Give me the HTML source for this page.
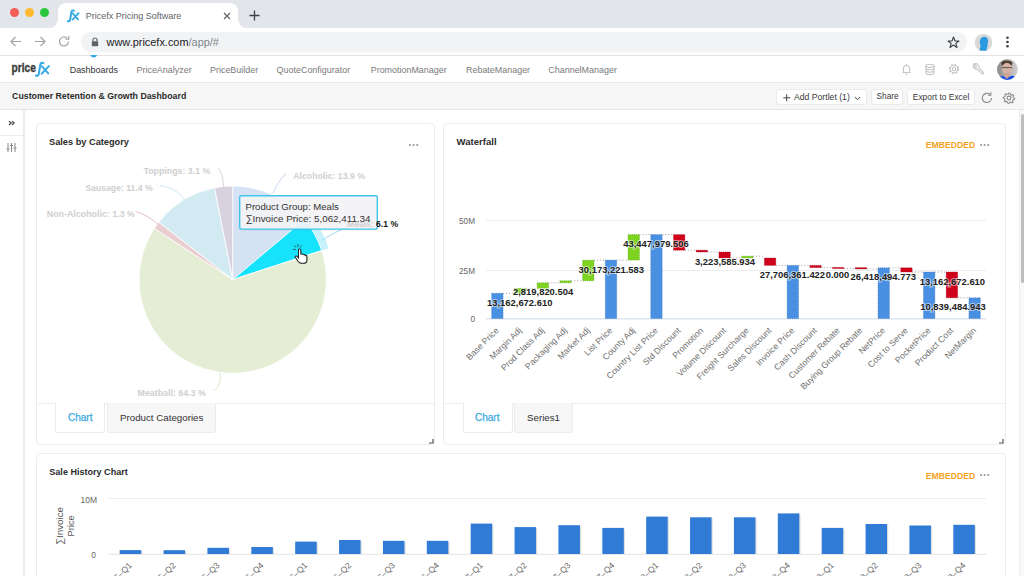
<!DOCTYPE html>
<html><head><meta charset="utf-8"><title>Pricefx Dashboard</title>
<style>
html,body{margin:0;padding:0;width:1024px;height:576px;overflow:hidden;background:#fff;font-family:"Liberation Sans", sans-serif;}
</style></head><body>
<div style="position:relative;width:1024px;height:576px;overflow:hidden">
<div style="position:absolute;left:0px;top:0px;width:1024px;height:28px;background:#e2e5e9"></div>
<div style="position:absolute;left:9.5px;top:8px;width:9px;height:9px;background:#f55e57;border-radius:50%"></div>
<div style="position:absolute;left:24.5px;top:8px;width:9px;height:9px;background:#fdb932;border-radius:50%"></div>
<div style="position:absolute;left:39.5px;top:8px;width:9px;height:9px;background:#2bc73f;border-radius:50%"></div>
<div style="position:absolute;left:58px;top:3px;width:180px;height:26px;background:#fff;border-radius:8px 8px 0 0"></div>
<div style="position:absolute;left:50px;top:21px;width:8px;height:7px;background:radial-gradient(circle at 0 0,#e2e5e9 6.6px,#fff 7.4px)"></div>
<div style="position:absolute;left:238px;top:21px;width:8px;height:7px;background:radial-gradient(circle at 100% 0,#e2e5e9 6.6px,#fff 7.4px)"></div>
<svg style="position:absolute;left:66px;top:9px" width="15" height="15"><g transform="translate(1 1)" fill="none" stroke="#36a9e1" stroke-linecap="round"><path d="M6.9 0.7C5.8 0.2 4.7 0.6 4.4 2.2L3.1 9.8C2.8 11.2 2 11.6 0.8 11.2" stroke-width="2"/><path d="M5.8 3.4L11 9.4M11.6 3.2L5.6 9.6" stroke-width="1.8"/></g></svg>
<div style="position:absolute;left:85.7px;top:11.72px;font-size:9.03px;line-height:9.03px;color:#5f6368;font-weight:normal;white-space:nowrap;">Pricefx Pricing Software</div>
<svg style="position:absolute;left:222.5px;top:12px" width="8" height="8"><path d="M1 1L7 7M7 1L1 7" stroke="#5f6368" stroke-width="1.15"/></svg>
<svg style="position:absolute;left:249px;top:10px" width="11" height="11"><path d="M5.5 0.5V10.5M0.5 5.5H10.5" stroke="#3c4043" stroke-width="1.3"/></svg>
<div style="position:absolute;left:0px;top:28px;width:1024px;height:27px;background:#fff"></div>
<div style="position:absolute;left:0px;top:55px;width:1024px;height:1px;background:#e3e3e3"></div>
<svg style="position:absolute;left:9px;top:35px" width="50" height="13"><path d="M12 6.5H2M6.5 2L2 6.5L6.5 11" fill="none" stroke="#a0a4a8" stroke-width="1.2"/><path d="M26 6.5H36M31.5 2L36 6.5L31.5 11" fill="none" stroke="#a0a4a8" stroke-width="1.2"/></svg>
<svg style="position:absolute;left:58px;top:35px" width="13" height="13"><path d="M10.5 6.5A4.5 4.5 0 1 1 9.2 3.3" fill="none" stroke="#a0a4a8" stroke-width="1.2"/><path d="M10.8 1V4.2H7.6" fill="none" stroke="#a0a4a8" stroke-width="1.2"/></svg>
<div style="position:absolute;left:81px;top:32px;width:886px;height:20px;background:#f1f3f4;border-radius:10px"></div>
<svg style="position:absolute;left:91px;top:37px" width="8" height="10"><path d="M2 4.5V3A2 2 0 0 1 6 3V4.5" fill="none" stroke="#5f6368" stroke-width="1.2"/><rect x="0.8" y="4.3" width="6.4" height="5" rx="0.8" fill="#5f6368"/></svg>
<div style="position:absolute;left:106.6px;top:37.11px;font-size:10.93px;line-height:10.93px;color:#202124;font-weight:normal;white-space:nowrap;"><span style="color:#202124">www.pricefx.com</span><span style="color:#80868b">/app/#</span></div>
<svg style="position:absolute;left:947px;top:36px" width="13" height="13"><path d="M6.5 1L8 5H12L8.8 7.4L10 11.5L6.5 9L3 11.5L4.2 7.4L1 5H5Z" fill="none" stroke="#3c4043" stroke-width="1.1" stroke-linejoin="round"/></svg>
<svg style="position:absolute;left:974px;top:33px" width="19" height="19"><circle cx="9.5" cy="9.5" r="8.8" fill="#d9d9d9"/><path d="M5.5 17.5C6 15 6.5 14 6.6 12C5 10.5 5.5 4 10 3.8C13.5 3.8 14.5 6.5 14 9C13.8 10 13.5 11 13.5 12.5C13.5 14 12.5 15 12.5 17.8Z" fill="#2c9ae2"/></svg>
<svg style="position:absolute;left:1004px;top:34px" width="8" height="16" fill="#3c4043"><circle cx="3.5" cy="3.8" r="1.3"/><circle cx="3.5" cy="8" r="1.3"/><circle cx="3.5" cy="12.2" r="1.3"/></svg>
<div style="position:absolute;left:0px;top:56px;width:1024px;height:26px;background:#fff"></div>
<div style="position:absolute;left:0px;top:82px;width:1024px;height:1px;background:#ebebeb"></div>
<div style="position:absolute;left:0px;top:52px;width:1024px;height:3px;background:#fff"></div>
<div style="position:absolute;left:0px;top:55px;width:1024px;height:1px;background:#e3e3e3"></div>
<svg style="position:absolute;left:88px;top:55px" width="12" height="5"><path d="M2.32 0A3.5 3.5 0 0 0 9.08 0Z" fill="#3aa5ef"/></svg>
<svg style="position:absolute;left:0;top:56px" width="60" height="26"><text x="11.6" y="16.4" font-family='"Liberation Sans",sans-serif' font-size="13.6" font-weight="bold" fill="#3d3d3d" stroke="#3d3d3d" stroke-width="0.45" textLength="24.2" lengthAdjust="spacingAndGlyphs">price</text><g transform="translate(35 6.2) scale(1.2)" fill="none" stroke="#36aae4" stroke-linecap="round"><path d="M6.9 0.7C5.8 0.2 4.7 0.6 4.4 2.2L3.1 9.8C2.8 11.2 2 11.6 0.8 11.2" stroke-width="1.75"/><path d="M5.8 3.4L11 9.4M11.6 3.2L5.6 9.6" stroke-width="1.6"/></g></svg>
<div style="position:absolute;left:69.7px;top:65.59px;font-size:8.95px;line-height:8.95px;color:#333;font-weight:normal;white-space:nowrap;">Dashboards</div>
<div style="position:absolute;left:136.5px;top:65.59px;font-size:8.95px;line-height:8.95px;color:#7a7a7a;font-weight:normal;white-space:nowrap;">PriceAnalyzer</div>
<div style="position:absolute;left:210px;top:65.59px;font-size:8.95px;line-height:8.95px;color:#7a7a7a;font-weight:normal;white-space:nowrap;">PriceBuilder</div>
<div style="position:absolute;left:276.6px;top:65.59px;font-size:8.95px;line-height:8.95px;color:#7a7a7a;font-weight:normal;white-space:nowrap;">QuoteConfigurator</div>
<div style="position:absolute;left:370.7px;top:65.59px;font-size:8.95px;line-height:8.95px;color:#7a7a7a;font-weight:normal;white-space:nowrap;">PromotionManager</div>
<div style="position:absolute;left:466px;top:65.59px;font-size:8.95px;line-height:8.95px;color:#7a7a7a;font-weight:normal;white-space:nowrap;">RebateManager</div>
<div style="position:absolute;left:548.3px;top:65.59px;font-size:8.95px;line-height:8.95px;color:#7a7a7a;font-weight:normal;white-space:nowrap;">ChannelManager</div>
<svg style="position:absolute;left:900px;top:62px" width="90" height="14" fill="none" stroke="#c4c4c4" stroke-width="1.1"><path d="M2.5 10.5H10.5M3.5 10.5V6.5A3 3 0 0 1 9.5 6.5V10.5M5.5 12.3H7.5M6.5 2V3.5"/><ellipse cx="30" cy="3.8" rx="4" ry="1.6"/><path d="M26 3.8V11A4 1.6 0 0 0 34 11V3.8M26 6.2A4 1.6 0 0 0 34 6.2M26 8.6A4 1.6 0 0 0 34 8.6"/><circle cx="54" cy="7" r="1.7"/><circle cx="54" cy="7" r="3.7"/><circle cx="54" cy="7" r="4.6" stroke-width="1.5" stroke-dasharray="1.5 2.11"/><path d="M73.6 2.6A3.2 3.2 0 0 0 77.4 7L82 11.6A0.9 0.9 0 0 0 83.3 10.3L78.7 5.7A3.2 3.2 0 0 0 74.3 1.9L76.3 3.9L75.9 5.5L74.3 5.9Z"/></svg>
<svg style="position:absolute;left:996.7px;top:58.7px" width="21" height="21"><defs><clipPath id="av"><circle cx="10.4" cy="10.5" r="10.4"/></clipPath><linearGradient id="avg" x1="0" x2="1"><stop offset="0" stop-color="#8e8c8b"/><stop offset="1" stop-color="#d2d0ce"/></linearGradient><filter id="avb"><feGaussianBlur stdDeviation="0.45"/></filter></defs><g clip-path="url(#av)"><rect width="21" height="21" fill="url(#avg)"/><g filter="url(#avb)"><ellipse cx="9.8" cy="4.6" rx="5.6" ry="3.2" fill="#4d3d35"/><ellipse cx="9.9" cy="9.8" rx="4.9" ry="6" fill="#d8b3a3"/><rect x="7.6" y="14" width="5" height="6" fill="#cfa493"/><path d="M4.6 8.6H15.2" stroke="#5a5555" stroke-width="1"/><path d="M1.5 21.5L3.5 17.5C5.5 16.2 7.5 17.5 10 20C12.5 17.5 14.5 16.2 17 17.2L20 21.5Z" fill="#1f4fe3"/></g></g></svg>
<div style="position:absolute;left:0px;top:83px;width:1024px;height:26px;background:#f6f6f6"></div>
<div style="position:absolute;left:0px;top:109px;width:1024px;height:1px;background:#e6e6e6"></div>
<div style="position:absolute;left:12.1px;top:91.73px;font-size:8.79px;line-height:8.79px;color:#2b2b2b;font-weight:bold;white-space:nowrap;">Customer Retention &amp; Growth Dashboard</div>
<div style="position:absolute;left:776.3px;top:88.8px;width:90.8px;height:16.2px;background:#fff;border:1px solid #ebebeb;border-radius:3px;box-sizing:border-box"></div>
<div style="position:absolute;left:871.1px;top:88.8px;width:32.1px;height:16.2px;background:#fff;border:1px solid #ebebeb;border-radius:3px;box-sizing:border-box"></div>
<div style="position:absolute;left:907.4px;top:88.8px;width:67.3px;height:16.2px;background:#fff;border:1px solid #ebebeb;border-radius:3px;box-sizing:border-box"></div>
<svg style="position:absolute;left:782.5px;top:93.5px" width="8" height="8"><path d="M3.7 0.3V7.3M0.3 3.8H7.3" stroke="#444" stroke-width="1"/></svg>
<div style="position:absolute;left:793.9px;top:92.81px;font-size:8.69px;line-height:8.69px;color:#3a3a3a;font-weight:normal;white-space:nowrap;">Add Portlet (1)</div>
<svg style="position:absolute;left:854px;top:95.5px" width="7" height="5"><path d="M0.8 1L3.5 3.7L6.2 1" fill="none" stroke="#444" stroke-width="1"/></svg>
<div style="position:absolute;left:876.6px;top:93.20px;font-size:8.24px;line-height:8.24px;color:#3a3a3a;font-weight:normal;white-space:nowrap;">Share</div>
<div style="position:absolute;left:912.8px;top:93.04px;font-size:8.42px;line-height:8.42px;color:#3a3a3a;font-weight:normal;white-space:nowrap;">Export to Excel</div>
<svg style="position:absolute;left:980px;top:90.5px" width="14" height="14"><path d="M11.5 7A4.6 4.6 0 1 1 10 3.5" fill="none" stroke="#8a8a8a" stroke-width="1.1"/><path d="M10.8 1.2V4.3H7.8" fill="none" stroke="#8a8a8a" stroke-width="1.1"/></svg>
<svg style="position:absolute;left:1002px;top:90.5px" width="14" height="14" fill="none" stroke="#8a8a8a" stroke-width="1.1"><circle cx="7" cy="7" r="1.9"/><path d="M7 1.8L8.1 2L8.5 3.4L9.7 4L11 3.5L11.8 4.4L11.2 5.7L11.6 6.9L13 7.3L12.8 8.5L11.4 8.9L10.8 10L11.3 11.3L10.3 12L9.2 11.2L7.8 11.5L7 12.8L5.8 12.6L5.4 11.2L4.2 10.5L2.9 11L2.1 10.1L2.7 8.8L2.3 7.6L0.9 7.2L1.2 6L2.6 5.6L3.2 4.5L2.7 3.2L3.8 2.4L4.9 3.3L6.3 3Z" transform="translate(7 7) scale(0.95) translate(-7 -7)"/></svg>
<div style="position:absolute;left:0px;top:110px;width:1024px;height:466px;background:#fff"></div>
<div style="position:absolute;left:23px;top:110px;width:1.6px;height:466px;background:#ececec"></div>
<div style="position:absolute;left:0px;top:134.8px;width:23px;height:1.4px;background:#ececec"></div>
<svg style="position:absolute;left:8px;top:119.5px" width="8" height="7"><path d="M1 1.2L3.1 3.1L1 5M4 1.2L6.1 3.1L4 5" fill="none" stroke="#555" stroke-width="1.4"/></svg>
<svg style="position:absolute;left:6px;top:141.5px" width="11" height="11" fill="none" stroke="#888" stroke-width="1"><path d="M2 1V10M5.5 1V10M9 1V10"/><path d="M0.5 7H3.5M4 3.5H7M7.5 6H10.5"/></svg>
<div style="position:absolute;left:1018.5px;top:110px;width:5.5px;height:466px;background:#f8f8f8;border-left:1px solid #eeeeee"></div>
<div style="position:absolute;left:1020.5px;top:114px;width:3.5px;height:169px;background:#bdbdbd;border-radius:2px"></div>
<div style="position:absolute;left:36.3px;top:123px;width:399.2px;height:322.4px;background:#fff;border:1px solid #ededed;border-radius:4px;box-sizing:border-box"></div>
<div style="position:absolute;left:443px;top:123px;width:563px;height:322.4px;background:#fff;border:1px solid #ededed;border-radius:4px;box-sizing:border-box"></div>
<div style="position:absolute;left:36.3px;top:453.3px;width:969.7px;height:140px;background:#fff;border:1px solid #ededed;border-radius:4px;box-sizing:border-box"></div>
<div style="position:absolute;left:49px;top:137.75px;font-size:9.23px;line-height:9.23px;color:#2b2b2b;font-weight:bold;white-space:nowrap;">Sales by Category</div>
<div style="position:absolute;left:456.6px;top:137.47px;font-size:9.56px;line-height:9.56px;color:#2b2b2b;font-weight:bold;white-space:nowrap;">Waterfall</div>
<div style="position:absolute;left:49.3px;top:468.01px;font-size:9.05px;line-height:9.05px;color:#2b2b2b;font-weight:bold;white-space:nowrap;">Sale History Chart</div>
<svg style="position:absolute;left:408px;top:141.5px" width="14" height="6" fill="#9a9a9a"><circle cx="2" cy="3" r="1.1"/><circle cx="5.6" cy="3" r="1.1"/><circle cx="9.2" cy="3" r="1.1"/></svg>
<svg style="position:absolute;left:979px;top:141.5px" width="14" height="6" fill="#9a9a9a"><circle cx="2" cy="3" r="1.1"/><circle cx="5.6" cy="3" r="1.1"/><circle cx="9.2" cy="3" r="1.1"/></svg>
<svg style="position:absolute;left:979px;top:472px" width="14" height="6" fill="#9a9a9a"><circle cx="2" cy="3" r="1.1"/><circle cx="5.6" cy="3" r="1.1"/><circle cx="9.2" cy="3" r="1.1"/></svg>
<div style="position:absolute;left:925.8px;top:141.26px;font-size:8.63px;line-height:8.63px;color:#f5a21e;font-weight:bold;white-space:nowrap;">EMBEDDED</div>
<div style="position:absolute;left:925.8px;top:471.66px;font-size:8.63px;line-height:8.63px;color:#f5a21e;font-weight:bold;white-space:nowrap;">EMBEDDED</div>
<div style="position:absolute;left:37.5px;top:402.5px;width:397px;height:1px;background:#ececec"></div>
<div style="position:absolute;left:55.4px;top:402.5px;width:49.8px;height:30px;background:#fff;border:1px solid #ececec;border-top:none;border-radius:0 0 3px 3px;box-sizing:border-box"></div>
<div style="position:absolute;left:107px;top:402.5px;width:109px;height:30px;background:#f7f7f7;border:1px solid #ececec;border-top:none;border-radius:0 0 3px 3px;box-sizing:border-box"></div>
<div style="position:absolute;left:68px;top:412.78px;font-size:10.02px;line-height:10.02px;color:#39a9e0;font-weight:normal;white-space:nowrap;-webkit-text-stroke:0.25px #39a9e0">Chart</div>
<div style="position:absolute;left:120px;top:413.02px;font-size:9.74px;line-height:9.74px;color:#333;font-weight:normal;white-space:nowrap;">Product Categories</div>
<div style="position:absolute;left:444.5px;top:402.5px;width:560.5px;height:1px;background:#ececec"></div>
<div style="position:absolute;left:462.6px;top:402.5px;width:50px;height:30px;background:#fff;border:1px solid #ececec;border-top:none;border-radius:0 0 3px 3px;box-sizing:border-box"></div>
<div style="position:absolute;left:514px;top:402.5px;width:59px;height:30px;background:#f7f7f7;border:1px solid #ececec;border-top:none;border-radius:0 0 3px 3px;box-sizing:border-box"></div>
<div style="position:absolute;left:475px;top:412.78px;font-size:10.02px;line-height:10.02px;color:#39a9e0;font-weight:normal;white-space:nowrap;-webkit-text-stroke:0.25px #39a9e0">Chart</div>
<div style="position:absolute;left:527px;top:413.02px;font-size:9.74px;line-height:9.74px;color:#333;font-weight:normal;white-space:nowrap;">Series1</div>
<svg style="position:absolute;left:429px;top:438.5px" width="5" height="5"><path d="M4 0V4H0" fill="none" stroke="#555" stroke-width="1.2"/></svg>
<svg style="position:absolute;left:999px;top:438.5px" width="5" height="5"><path d="M4 0V4H0" fill="none" stroke="#555" stroke-width="1.2"/></svg>
<svg style="position:absolute;left:0;top:0" width="1024" height="576">
<path d="M232.7,279.6L232.70,186.00A93.6,93.6 0 0 1 304.39,219.42Z" fill="#d4e2f4" stroke="#fff" stroke-width="0.8" stroke-linejoin="round"/>
<path d="M304.39,219.42L310.06,214.66A101,101 0 0 1 328.72,248.27L321.68,250.56A93.6,93.6 0 0 0 304.39,219.42Z" fill="#c6f3fb"/>
<path d="M232.7,279.6L304.39,219.42A93.6,93.6 0 0 1 321.68,250.56Z" fill="#17e2fb" stroke="#fff" stroke-width="0.8" stroke-linejoin="round"/>
<path d="M232.7,279.6L321.68,250.56A93.6,93.6 0 1 1 154.36,228.38Z" fill="#e5eed5" stroke="#fff" stroke-width="0.8" stroke-linejoin="round"/>
<path d="M232.7,279.6L154.36,228.38A93.6,93.6 0 0 1 158.79,222.16Z" fill="#e9cdd1" stroke="#fff" stroke-width="0.8" stroke-linejoin="round"/>
<path d="M232.7,279.6L158.79,222.16A93.6,93.6 0 0 1 214.60,187.77Z" fill="#d2eaf2" stroke="#fff" stroke-width="0.8" stroke-linejoin="round"/>
<path d="M232.7,279.6L214.60,187.77A93.6,93.6 0 0 1 232.70,186.00Z" fill="#d8d1df" stroke="#fff" stroke-width="0.8" stroke-linejoin="round"/>
<path d="M218,168.3 C221,170 223,178 223.6,186.3" fill="none" stroke="#d8d1df" stroke-width="1"/>
<path d="M160,185.7 C170,187 180,192 184,199.5" fill="none" stroke="#c9e6f0" stroke-width="1"/>
<path d="M135.7,211.6 C145,214 152,219 158,224.3" fill="none" stroke="#e3bfc4" stroke-width="1"/>
<path d="M286,173 C280,180 276,186 273,193.4" fill="none" stroke="#c9dbf2" stroke-width="1"/>
<path d="M220,373 C221,380 219,388 213.75,390.8" fill="none" stroke="#dde7c6" stroke-width="1"/>
<path d="M322,240 C335,232 345,228 350,226" fill="none" stroke="#9bdcf0" stroke-width="1"/>
<text x="143.5" y="173.5" font-family='"Liberation Sans", sans-serif' font-size="8.8" font-weight="bold" fill="#cfcfcf" text-anchor="start" >Toppings: 3.1 %</text>
<text x="85.3" y="190.7" font-family='"Liberation Sans", sans-serif' font-size="8.69" font-weight="bold" fill="#cfcfcf" text-anchor="start" >Sausage: 11.4 %</text>
<text x="46.8" y="216.5" font-family='"Liberation Sans", sans-serif' font-size="8.87" font-weight="bold" fill="#cfcfcf" text-anchor="start" >Non-Alcoholic: 1.3 %</text>
<text x="293.3" y="178.5" font-family='"Liberation Sans", sans-serif' font-size="8.72" font-weight="bold" fill="#cfcfcf" text-anchor="start" >Alcoholic: 13.9 %</text>
<text x="137.5" y="395.5" font-family='"Liberation Sans", sans-serif' font-size="8.87" font-weight="bold" fill="#cfcfcf" text-anchor="start" >Meatball: 64.3 %</text>
<rect x="240" y="196" width="137" height="33" rx="1.5" fill="#000" opacity="0.06" transform="translate(1 1.5)"/>
<rect x="239.7" y="195.7" width="137.6" height="33.4" rx="1.5" fill="#f4f4f6" fill-opacity="0.92" stroke="#3fc5ec" stroke-width="1.4"/>
<text x="347" y="227" font-family='"Liberation Sans", sans-serif' font-size="8.58" font-weight="bold" fill="#cfcfcf" text-anchor="start" >Meals: <tspan fill="#111">6.1 %</tspan></text>
<text x="245.5" y="210" font-family='"Liberation Sans", sans-serif' font-size="9.61" font-weight="normal" fill="#333" text-anchor="start" >Product Group: Meals</text>
<text x="245.5" y="221.5" font-family='"Liberation Sans", sans-serif' font-size="9.8" font-weight="normal" fill="#333" text-anchor="start" >∑Invoice Price: 5,062,411.34</text>
<g transform="translate(294.8 248.6) scale(1.12)"><path d="M3.3 1.2V8.2L1.7 6.8C1 6.2 0 6.9 0.5 7.7L3 11.5C3.8 12.6 4.8 13 6 13H8C9.6 13 10.8 11.8 10.8 10.2V6.8C10.8 6.1 9.8 6 9.6 6.8V6.1C9.6 5.3 8.5 5.3 8.4 6V5.6C8.4 4.8 7.2 4.8 7.1 5.5V5.3C7.1 4.6 5.5 4.6 5.4 5.3V1.2C5.4 0 3.3 0 3.3 1.2Z" fill="#000" opacity="0.25" transform="translate(0.6 0.8)"/><path d="M3.3 1.2V8.2L1.7 6.8C1 6.2 0 6.9 0.5 7.7L3 11.5C3.8 12.6 4.8 13 6 13H8C9.6 13 10.8 11.8 10.8 10.2V6.8C10.8 6.1 9.8 6 9.6 6.8V6.1C9.6 5.3 8.5 5.3 8.4 6V5.6C8.4 4.8 7.2 4.8 7.1 5.5V5.3C7.1 4.6 5.5 4.6 5.4 5.3V1.2C5.4 0 3.3 0 3.3 1.2Z" fill="#fff" stroke="#222" stroke-width="0.9"/></g>
<g stroke="#333" stroke-width="0.75"><path d="M298 244V247M293 249.5H295.8M294.4 245.6L296.3 247.4M301.8 245.6L299.9 247.4"/></g>
<g stroke="#ececec" stroke-width="1"><path d="M486,220.5H986M486,270.5H986"/></g>
<path d="M486,318.8H986" stroke="#d8e2ee" stroke-width="1.2"/>
<text x="475" y="223.5" font-family='"Liberation Sans", sans-serif' font-size="8.2" font-weight="normal" fill="#666" text-anchor="end" >50M</text>
<text x="475" y="273.5" font-family='"Liberation Sans", sans-serif' font-size="8.2" font-weight="normal" fill="#666" text-anchor="end" >25M</text>
<text x="475" y="322" font-family='"Liberation Sans", sans-serif' font-size="8.2" font-weight="normal" fill="#666" text-anchor="end" >0</text>
<rect x="491.66" y="293.3" width="11.4" height="25.20" fill="#4a90e2" stroke="#2f6fbf" stroke-width="0.6" stroke-dasharray="1 1"/>
<path d="M503.06,293.3H514.39" stroke="#888" stroke-width="0.8" stroke-dasharray="1 2"/>
<text x="499.36" y="331" transform="rotate(-45 499.36 331)" font-family='"Liberation Sans", sans-serif' font-size="8.7" fill="#6f6f6f" text-anchor="end">Base Price</text>
<rect x="514.39" y="288.4" width="11.4" height="4.90" fill="#7ed321" stroke="#5aa513" stroke-width="0.6" stroke-dasharray="1 1"/>
<path d="M525.79,288.4H537.12" stroke="#888" stroke-width="0.8" stroke-dasharray="1 2"/>
<text x="522.09" y="331" transform="rotate(-45 522.09 331)" font-family='"Liberation Sans", sans-serif' font-size="8.7" fill="#6f6f6f" text-anchor="end">Margin Adj</text>
<rect x="537.12" y="282.8" width="11.4" height="5.60" fill="#7ed321" stroke="#5aa513" stroke-width="0.6" stroke-dasharray="1 1"/>
<path d="M548.52,282.8H559.85" stroke="#888" stroke-width="0.8" stroke-dasharray="1 2"/>
<text x="544.82" y="331" transform="rotate(-45 544.82 331)" font-family='"Liberation Sans", sans-serif' font-size="8.7" fill="#6f6f6f" text-anchor="end">Prod Class Adj</text>
<rect x="559.85" y="280.8" width="11.4" height="2.00" fill="#7ed321" stroke="#5aa513" stroke-width="0.6" stroke-dasharray="1 1"/>
<path d="M571.25,280.8H582.57" stroke="#888" stroke-width="0.8" stroke-dasharray="1 2"/>
<text x="567.55" y="331" transform="rotate(-45 567.55 331)" font-family='"Liberation Sans", sans-serif' font-size="8.7" fill="#6f6f6f" text-anchor="end">Packaging Adj</text>
<rect x="582.57" y="260.2" width="11.4" height="20.60" fill="#7ed321" stroke="#5aa513" stroke-width="0.6" stroke-dasharray="1 1"/>
<path d="M593.97,260.2H605.30" stroke="#888" stroke-width="0.8" stroke-dasharray="1 2"/>
<text x="590.27" y="331" transform="rotate(-45 590.27 331)" font-family='"Liberation Sans", sans-serif' font-size="8.7" fill="#6f6f6f" text-anchor="end">Market Adj</text>
<rect x="605.30" y="260.1" width="11.4" height="58.40" fill="#4a90e2" stroke="#2f6fbf" stroke-width="0.6" stroke-dasharray="1 1"/>
<path d="M616.70,260.1H628.03" stroke="#888" stroke-width="0.8" stroke-dasharray="1 2"/>
<text x="613.00" y="331" transform="rotate(-45 613.00 331)" font-family='"Liberation Sans", sans-serif' font-size="8.7" fill="#6f6f6f" text-anchor="end">List Price</text>
<rect x="628.03" y="234.6" width="11.4" height="25.50" fill="#7ed321" stroke="#5aa513" stroke-width="0.6" stroke-dasharray="1 1"/>
<path d="M639.43,234.6H650.75" stroke="#888" stroke-width="0.8" stroke-dasharray="1 2"/>
<text x="635.73" y="331" transform="rotate(-45 635.73 331)" font-family='"Liberation Sans", sans-serif' font-size="8.7" fill="#6f6f6f" text-anchor="end">County Adj</text>
<rect x="650.75" y="234.6" width="11.4" height="83.90" fill="#4a90e2" stroke="#2f6fbf" stroke-width="0.6" stroke-dasharray="1 1"/>
<path d="M662.15,234.6H673.48" stroke="#888" stroke-width="0.8" stroke-dasharray="1 2"/>
<text x="658.45" y="331" transform="rotate(-45 658.45 331)" font-family='"Liberation Sans", sans-serif' font-size="8.7" fill="#6f6f6f" text-anchor="end">Country List Price</text>
<rect x="673.48" y="234.6" width="11.4" height="15.60" fill="#d0021b" stroke="#9e0012" stroke-width="0.6" stroke-dasharray="1 1"/>
<path d="M684.88,250.2H696.21" stroke="#888" stroke-width="0.8" stroke-dasharray="1 2"/>
<text x="681.18" y="331" transform="rotate(-45 681.18 331)" font-family='"Liberation Sans", sans-serif' font-size="8.7" fill="#6f6f6f" text-anchor="end">Std Discount</text>
<rect x="696.21" y="250.2" width="11.4" height="1.80" fill="#d0021b" stroke="#9e0012" stroke-width="0.6" stroke-dasharray="1 1"/>
<path d="M707.61,252H718.94" stroke="#888" stroke-width="0.8" stroke-dasharray="1 2"/>
<text x="703.91" y="331" transform="rotate(-45 703.91 331)" font-family='"Liberation Sans", sans-serif' font-size="8.7" fill="#6f6f6f" text-anchor="end">Promotion</text>
<rect x="718.94" y="252" width="11.4" height="6.00" fill="#d0021b" stroke="#9e0012" stroke-width="0.6" stroke-dasharray="1 1"/>
<path d="M730.34,258H741.66" stroke="#888" stroke-width="0.8" stroke-dasharray="1 2"/>
<text x="726.64" y="331" transform="rotate(-45 726.64 331)" font-family='"Liberation Sans", sans-serif' font-size="8.7" fill="#6f6f6f" text-anchor="end">Volume Discount</text>
<rect x="741.66" y="256.2" width="11.4" height="1.80" fill="#7ed321" stroke="#5aa513" stroke-width="0.6" stroke-dasharray="1 1"/>
<path d="M753.06,256.2H764.39" stroke="#888" stroke-width="0.8" stroke-dasharray="1 2"/>
<text x="749.36" y="331" transform="rotate(-45 749.36 331)" font-family='"Liberation Sans", sans-serif' font-size="8.7" fill="#6f6f6f" text-anchor="end">Freight Surcharge</text>
<rect x="764.39" y="258" width="11.4" height="7.40" fill="#d0021b" stroke="#9e0012" stroke-width="0.6" stroke-dasharray="1 1"/>
<path d="M775.79,265.4H787.12" stroke="#888" stroke-width="0.8" stroke-dasharray="1 2"/>
<text x="772.09" y="331" transform="rotate(-45 772.09 331)" font-family='"Liberation Sans", sans-serif' font-size="8.7" fill="#6f6f6f" text-anchor="end">Sales Discount</text>
<rect x="787.12" y="265.4" width="11.4" height="53.10" fill="#4a90e2" stroke="#2f6fbf" stroke-width="0.6" stroke-dasharray="1 1"/>
<path d="M798.52,265.4H809.85" stroke="#888" stroke-width="0.8" stroke-dasharray="1 2"/>
<text x="794.82" y="331" transform="rotate(-45 794.82 331)" font-family='"Liberation Sans", sans-serif' font-size="8.7" fill="#6f6f6f" text-anchor="end">Invoice Price</text>
<rect x="809.85" y="265.4" width="11.4" height="2.20" fill="#d0021b" stroke="#9e0012" stroke-width="0.6" stroke-dasharray="1 1"/>
<path d="M821.25,267.6H832.57" stroke="#888" stroke-width="0.8" stroke-dasharray="1 2"/>
<text x="817.55" y="331" transform="rotate(-45 817.55 331)" font-family='"Liberation Sans", sans-serif' font-size="8.7" fill="#6f6f6f" text-anchor="end">Cash Discount</text>
<rect x="832.57" y="267.4" width="11.4" height="1.20" fill="#d0021b" stroke="#9e0012" stroke-width="0.6" stroke-dasharray="1 1"/>
<path d="M843.97,268.6H855.30" stroke="#888" stroke-width="0.8" stroke-dasharray="1 2"/>
<text x="840.27" y="331" transform="rotate(-45 840.27 331)" font-family='"Liberation Sans", sans-serif' font-size="8.7" fill="#6f6f6f" text-anchor="end">Customer Rebate</text>
<rect x="855.30" y="267.6" width="11.4" height="1.40" fill="#d0021b" stroke="#9e0012" stroke-width="0.6" stroke-dasharray="1 1"/>
<path d="M866.70,269H878.03" stroke="#888" stroke-width="0.8" stroke-dasharray="1 2"/>
<text x="863.00" y="331" transform="rotate(-45 863.00 331)" font-family='"Liberation Sans", sans-serif' font-size="8.7" fill="#6f6f6f" text-anchor="end">Buying Group Rebate</text>
<rect x="878.03" y="267.8" width="11.4" height="50.70" fill="#4a90e2" stroke="#2f6fbf" stroke-width="0.6" stroke-dasharray="1 1"/>
<path d="M889.43,267.8H900.75" stroke="#888" stroke-width="0.8" stroke-dasharray="1 2"/>
<text x="885.73" y="331" transform="rotate(-45 885.73 331)" font-family='"Liberation Sans", sans-serif' font-size="8.7" fill="#6f6f6f" text-anchor="end">NetPrice</text>
<rect x="900.75" y="267.8" width="11.4" height="4.20" fill="#d0021b" stroke="#9e0012" stroke-width="0.6" stroke-dasharray="1 1"/>
<path d="M912.15,272H923.48" stroke="#888" stroke-width="0.8" stroke-dasharray="1 2"/>
<text x="908.45" y="331" transform="rotate(-45 908.45 331)" font-family='"Liberation Sans", sans-serif' font-size="8.7" fill="#6f6f6f" text-anchor="end">Cost to Serve</text>
<rect x="923.48" y="272" width="11.4" height="46.50" fill="#4a90e2" stroke="#2f6fbf" stroke-width="0.6" stroke-dasharray="1 1"/>
<path d="M934.88,272H946.21" stroke="#888" stroke-width="0.8" stroke-dasharray="1 2"/>
<text x="931.18" y="331" transform="rotate(-45 931.18 331)" font-family='"Liberation Sans", sans-serif' font-size="8.7" fill="#6f6f6f" text-anchor="end">PocketPrice</text>
<rect x="946.21" y="272" width="11.4" height="25.80" fill="#d0021b" stroke="#9e0012" stroke-width="0.6" stroke-dasharray="1 1"/>
<path d="M957.61,297.8H968.94" stroke="#888" stroke-width="0.8" stroke-dasharray="1 2"/>
<text x="953.91" y="331" transform="rotate(-45 953.91 331)" font-family='"Liberation Sans", sans-serif' font-size="8.7" fill="#6f6f6f" text-anchor="end">Product Cost</text>
<rect x="968.94" y="297.8" width="11.4" height="20.70" fill="#4a90e2" stroke="#2f6fbf" stroke-width="0.6" stroke-dasharray="1 1"/>
<text x="976.64" y="331" transform="rotate(-45 976.64 331)" font-family='"Liberation Sans", sans-serif' font-size="8.7" fill="#6f6f6f" text-anchor="end">NetMargin</text>
<text x="487" y="306" font-family='"Liberation Sans", sans-serif' font-size="9.41" font-weight="bold" fill="#222" text-anchor="start" stroke="#fff" stroke-width="2" stroke-opacity="0.55" paint-order="stroke">13,162,672.610</text>
<text x="513" y="295.3" font-family='"Liberation Sans", sans-serif' font-size="9.41" font-weight="bold" fill="#222" text-anchor="start" stroke="#fff" stroke-width="2" stroke-opacity="0.55" paint-order="stroke">2,819,820.504</text>
<text x="578.6" y="272.6" font-family='"Liberation Sans", sans-serif' font-size="9.41" font-weight="bold" fill="#222" text-anchor="start" stroke="#fff" stroke-width="2" stroke-opacity="0.55" paint-order="stroke">30,173,221.583</text>
<text x="623.3" y="246.8" font-family='"Liberation Sans", sans-serif' font-size="9.41" font-weight="bold" fill="#222" text-anchor="start" stroke="#fff" stroke-width="2" stroke-opacity="0.55" paint-order="stroke">43,447,979.506</text>
<text x="694.9" y="264.7" font-family='"Liberation Sans", sans-serif' font-size="9.41" font-weight="bold" fill="#222" text-anchor="start" stroke="#fff" stroke-width="2" stroke-opacity="0.55" paint-order="stroke">3,223,585.934</text>
<text x="759.7" y="278" font-family='"Liberation Sans", sans-serif' font-size="9.41" font-weight="bold" fill="#222" text-anchor="start" stroke="#fff" stroke-width="2" stroke-opacity="0.55" paint-order="stroke">27,706,361.422</text>
<text x="825.7" y="278.3" font-family='"Liberation Sans", sans-serif' font-size="9.41" font-weight="bold" fill="#222" text-anchor="start" stroke="#fff" stroke-width="2" stroke-opacity="0.55" paint-order="stroke">0.000</text>
<text x="850.5" y="280.3" font-family='"Liberation Sans", sans-serif' font-size="9.41" font-weight="bold" fill="#222" text-anchor="start" stroke="#fff" stroke-width="2" stroke-opacity="0.55" paint-order="stroke">26,418,494.773</text>
<text x="919.7" y="284.5" font-family='"Liberation Sans", sans-serif' font-size="9.41" font-weight="bold" fill="#222" text-anchor="start" stroke="#fff" stroke-width="2" stroke-opacity="0.55" paint-order="stroke">13,162,672.610</text>
<text x="920.3" y="310.3" font-family='"Liberation Sans", sans-serif' font-size="9.41" font-weight="bold" fill="#222" text-anchor="start" stroke="#fff" stroke-width="2" stroke-opacity="0.55" paint-order="stroke">10,839,484.943</text>
<path d="M108.5,498.5H986" stroke="#ececec" stroke-width="1"/>
<path d="M108.5,554.3H986" stroke="#e3e3e3" stroke-width="1"/>
<text x="97" y="502.5" font-family='"Liberation Sans", sans-serif' font-size="8.5" font-weight="normal" fill="#666" text-anchor="end" >10M</text>
<text x="96" y="558" font-family='"Liberation Sans", sans-serif' font-size="8.5" font-weight="normal" fill="#666" text-anchor="end" >0</text>
<text transform="translate(63.3 526) rotate(-90)" font-family='"Liberation Sans", sans-serif' font-size="9.8" fill="#555" text-anchor="middle">∑Invoice</text>
<text transform="translate(74 525.8) rotate(-90)" font-family='"Liberation Sans", sans-serif' font-size="9.3" fill="#555" text-anchor="middle">Price</text>
<rect x="121.44" y="551.1" width="21" height="2.90" fill="#000" opacity="0.12"/>
<rect x="119.69" y="550.1" width="21.5" height="3.90" fill="#2f7bd6"/>
<text x="132.44" y="566" transform="rotate(-45 132.44 566)" font-family='"Liberation Sans", sans-serif' font-size="8.5" fill="#666" text-anchor="end">2015–Q1</text>
<rect x="165.31" y="551.2" width="21" height="2.80" fill="#000" opacity="0.12"/>
<rect x="163.56" y="550.2" width="21.5" height="3.80" fill="#2f7bd6"/>
<text x="176.31" y="566" transform="rotate(-45 176.31 566)" font-family='"Liberation Sans", sans-serif' font-size="8.5" fill="#666" text-anchor="end">2015–Q2</text>
<rect x="209.19" y="548.8" width="21" height="5.20" fill="#000" opacity="0.12"/>
<rect x="207.44" y="547.8" width="21.5" height="6.20" fill="#2f7bd6"/>
<text x="220.19" y="566" transform="rotate(-45 220.19 566)" font-family='"Liberation Sans", sans-serif' font-size="8.5" fill="#666" text-anchor="end">2015–Q3</text>
<rect x="253.06" y="548" width="21" height="6.00" fill="#000" opacity="0.12"/>
<rect x="251.31" y="547" width="21.5" height="7.00" fill="#2f7bd6"/>
<text x="264.06" y="566" transform="rotate(-45 264.06 566)" font-family='"Liberation Sans", sans-serif' font-size="8.5" fill="#666" text-anchor="end">2015–Q4</text>
<rect x="296.94" y="542.6" width="21" height="11.40" fill="#000" opacity="0.12"/>
<rect x="295.19" y="541.6" width="21.5" height="12.40" fill="#2f7bd6"/>
<text x="307.94" y="566" transform="rotate(-45 307.94 566)" font-family='"Liberation Sans", sans-serif' font-size="8.5" fill="#666" text-anchor="end">2016–Q1</text>
<rect x="340.81" y="541" width="21" height="13.00" fill="#000" opacity="0.12"/>
<rect x="339.06" y="540" width="21.5" height="14.00" fill="#2f7bd6"/>
<text x="351.81" y="566" transform="rotate(-45 351.81 566)" font-family='"Liberation Sans", sans-serif' font-size="8.5" fill="#666" text-anchor="end">2016–Q2</text>
<rect x="384.69" y="541.8" width="21" height="12.20" fill="#000" opacity="0.12"/>
<rect x="382.94" y="540.8" width="21.5" height="13.20" fill="#2f7bd6"/>
<text x="395.69" y="566" transform="rotate(-45 395.69 566)" font-family='"Liberation Sans", sans-serif' font-size="8.5" fill="#666" text-anchor="end">2016–Q3</text>
<rect x="428.56" y="541.8" width="21" height="12.20" fill="#000" opacity="0.12"/>
<rect x="426.81" y="540.8" width="21.5" height="13.20" fill="#2f7bd6"/>
<text x="439.56" y="566" transform="rotate(-45 439.56 566)" font-family='"Liberation Sans", sans-serif' font-size="8.5" fill="#666" text-anchor="end">2016–Q4</text>
<rect x="472.44" y="524.6" width="21" height="29.40" fill="#000" opacity="0.12"/>
<rect x="470.69" y="523.6" width="21.5" height="30.40" fill="#2f7bd6"/>
<text x="483.44" y="566" transform="rotate(-45 483.44 566)" font-family='"Liberation Sans", sans-serif' font-size="8.5" fill="#666" text-anchor="end">2017–Q1</text>
<rect x="516.31" y="528.1" width="21" height="25.90" fill="#000" opacity="0.12"/>
<rect x="514.56" y="527.1" width="21.5" height="26.90" fill="#2f7bd6"/>
<text x="527.31" y="566" transform="rotate(-45 527.31 566)" font-family='"Liberation Sans", sans-serif' font-size="8.5" fill="#666" text-anchor="end">2017–Q2</text>
<rect x="560.19" y="526.2" width="21" height="27.80" fill="#000" opacity="0.12"/>
<rect x="558.44" y="525.2" width="21.5" height="28.80" fill="#2f7bd6"/>
<text x="571.19" y="566" transform="rotate(-45 571.19 566)" font-family='"Liberation Sans", sans-serif' font-size="8.5" fill="#666" text-anchor="end">2017–Q3</text>
<rect x="604.06" y="528.9" width="21" height="25.10" fill="#000" opacity="0.12"/>
<rect x="602.31" y="527.9" width="21.5" height="26.10" fill="#2f7bd6"/>
<text x="615.06" y="566" transform="rotate(-45 615.06 566)" font-family='"Liberation Sans", sans-serif' font-size="8.5" fill="#666" text-anchor="end">2017–Q4</text>
<rect x="647.94" y="517.6" width="21" height="36.40" fill="#000" opacity="0.12"/>
<rect x="646.19" y="516.6" width="21.5" height="37.40" fill="#2f7bd6"/>
<text x="658.94" y="566" transform="rotate(-45 658.94 566)" font-family='"Liberation Sans", sans-serif' font-size="8.5" fill="#666" text-anchor="end">2018–Q1</text>
<rect x="691.81" y="518.3" width="21" height="35.70" fill="#000" opacity="0.12"/>
<rect x="690.06" y="517.3" width="21.5" height="36.70" fill="#2f7bd6"/>
<text x="702.81" y="566" transform="rotate(-45 702.81 566)" font-family='"Liberation Sans", sans-serif' font-size="8.5" fill="#666" text-anchor="end">2018–Q2</text>
<rect x="735.69" y="518.3" width="21" height="35.70" fill="#000" opacity="0.12"/>
<rect x="733.94" y="517.3" width="21.5" height="36.70" fill="#2f7bd6"/>
<text x="746.69" y="566" transform="rotate(-45 746.69 566)" font-family='"Liberation Sans", sans-serif' font-size="8.5" fill="#666" text-anchor="end">2018–Q3</text>
<rect x="779.56" y="514.4" width="21" height="39.60" fill="#000" opacity="0.12"/>
<rect x="777.81" y="513.4" width="21.5" height="40.60" fill="#2f7bd6"/>
<text x="790.56" y="566" transform="rotate(-45 790.56 566)" font-family='"Liberation Sans", sans-serif' font-size="8.5" fill="#666" text-anchor="end">2018–Q4</text>
<rect x="823.44" y="528.9" width="21" height="25.10" fill="#000" opacity="0.12"/>
<rect x="821.69" y="527.9" width="21.5" height="26.10" fill="#2f7bd6"/>
<text x="834.44" y="566" transform="rotate(-45 834.44 566)" font-family='"Liberation Sans", sans-serif' font-size="8.5" fill="#666" text-anchor="end">2019–Q1</text>
<rect x="867.31" y="525" width="21" height="29.00" fill="#000" opacity="0.12"/>
<rect x="865.56" y="524" width="21.5" height="30.00" fill="#2f7bd6"/>
<text x="878.31" y="566" transform="rotate(-45 878.31 566)" font-family='"Liberation Sans", sans-serif' font-size="8.5" fill="#666" text-anchor="end">2019–Q2</text>
<rect x="911.19" y="526.5" width="21" height="27.50" fill="#000" opacity="0.12"/>
<rect x="909.44" y="525.5" width="21.5" height="28.50" fill="#2f7bd6"/>
<text x="922.19" y="566" transform="rotate(-45 922.19 566)" font-family='"Liberation Sans", sans-serif' font-size="8.5" fill="#666" text-anchor="end">2019–Q3</text>
<rect x="955.06" y="525.8" width="21" height="28.20" fill="#000" opacity="0.12"/>
<rect x="953.31" y="524.8" width="21.5" height="29.20" fill="#2f7bd6"/>
<text x="966.06" y="566" transform="rotate(-45 966.06 566)" font-family='"Liberation Sans", sans-serif' font-size="8.5" fill="#666" text-anchor="end">2019–Q4</text>
</svg>
</div>
</body></html>
